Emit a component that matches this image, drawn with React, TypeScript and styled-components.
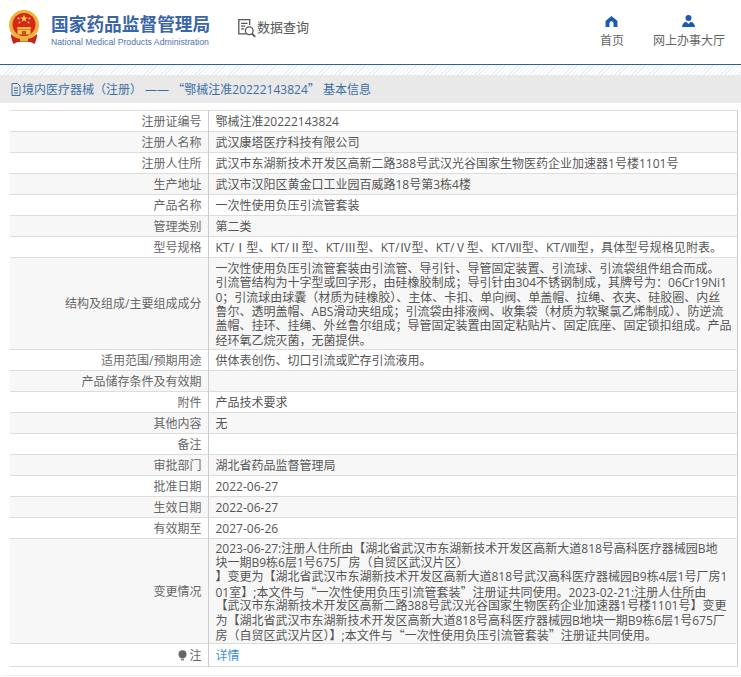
import React from "react";
import styled, { createGlobalStyle } from "styled-components";

const Global = createGlobalStyle`
  html, body { margin: 0; padding: 0; background: #fff; }
  body { font-family: "Open Sans", "Noto Sans CJK SC", sans-serif; font-size: 12px; color: #555; overflow: hidden; }
`;

const Page = styled.div`
  width: 741px;
  height: 677px;
  overflow: hidden;
  background: #fff;
`;

const Header = styled.header`
  height: 64px;
  display: flex;
  align-items: flex-start;
  border-bottom: 1px solid #2b6296;
  box-sizing: content-box;
`;

const Brand = styled.div`
  display: flex;
  align-items: flex-start;
  padding: 10px 0 0 8px;
  width: 237px;
  box-sizing: border-box;
  flex: none;
`;

const BrandText = styled.div`
  margin-left: 11px;
  display: flex;
  flex-direction: column;
`;

const BrandTitle = styled.div`
  font-family: "Noto Sans CJK SC", sans-serif;
  font-size: 17.7px;
  font-weight: 700;
  line-height: 24px;
  margin-top: 1px;
  color: #3a65a6;
  white-space: nowrap;
`;

const BrandSub = styled.div`
  font-family: "Liberation Sans", sans-serif;
  font-size: 8.7px;
  line-height: 12px;
  margin-top: 1px;
  color: #4f74ab;
  white-space: nowrap;
`;

const Query = styled.div`
  display: flex;
  align-items: center;
  padding-top: 18px;
  font-family: "Noto Sans CJK SC", sans-serif;
  font-size: 13px;
  line-height: 20px;
  color: #555;
  span { margin-top: -2px; }
`;

const Nav = styled.nav`
  margin-left: auto;
  display: flex;
  padding: 16px 16px 0 0;
  gap: 29px;
`;

const NavItem = styled.div`
  display: flex;
  flex-direction: column;
  align-items: center;
  font-family: "Noto Sans CJK SC", sans-serif;
  font-size: 12px;
  line-height: 16px;
  color: #666;
  svg { margin-bottom: 5px; }
`;

const Hatch = styled.div`
  height: 10px;
  background: repeating-linear-gradient(135deg, #e8f0f6 0 1px, #fff 1px 3px);
`;

const Band = styled.div`
  height: 28px;
  background: #e9e9e9;
  display: flex;
  align-items: center;
  padding-left: 11px;
  color: #3b6ea5;
  font-size: 12px;
  white-space: pre;
`;

const Panel = styled.main`
  margin-left: 1px;
  padding: 7px 2px 8px 9px;
  background: #fff;
  border-bottom: 1px solid #eee;
`;

const Table = styled.table`
  width: 728px;
  border-collapse: collapse;
  table-layout: fixed;
  border-top: 1px solid #ddd;
  border-right: 1px solid #ccc;
`;

const Row = styled.tr<{ $alt: boolean }>`
  background: ${(p) => (p.$alt ? "#f7f7f7" : "#fff")};
  border-bottom: 1px solid #ddd;
`;

const Label = styled.td<{ $h: number }>`
  width: 198px;
  box-sizing: border-box;
  height: ${(p) => p.$h}px;
  padding: 2px 6px 0 0;
  text-align: right;
  border-right: 1px solid #ccc;
  line-height: 14.4px;
  color: #666;
  white-space: nowrap;
`;

const Value = styled.td<{ $h: number; $spacing?: number }>`
  height: ${(p) => p.$h}px;
  box-sizing: border-box;
  padding: 2px 0 0 7px;
  line-height: 14.4px;
  color: #555;
  white-space: nowrap;
  letter-spacing: ${(p) => p.$spacing ?? 0}px;
`;

const Line = styled.span<{ $first?: boolean }>`
  display: block;
  height: 14.4px;
  margin-top: ${(p) => (p.$first ? 1 : 0)}px;
`;

const Quote = styled.span`
  font-family: "Noto Sans CJK SC", sans-serif;
`;

const DetailLink = styled.a`
  color: #3b8fd9;
  text-decoration: none;
  font-size: 12px;
`;

const Lamp = styled.svg`
  vertical-align: -1px;
  margin-right: 2px;
`;

// Curly quotes are full-width in the reference, so they take the CJK font.
const rich = (s: string) =>
  s.split(/([“”])/).map((part, i) =>
    part === "“" || part === "”" ? <Quote key={i}>{part}</Quote> : part
  );

const structure = [
  "一次性使用负压引流管套装由引流管、导引针、导管固定装置、引流球、引流袋组件组合而成。",
  "引流管结构为十字型或回字形，由硅橡胶制成；导引针由304不锈钢制成，其牌号为：06Cr19Ni1",
  "0；引流球由球囊（材质为硅橡胶）、主体、卡扣、单向阀、单盖帽、拉绳、衣夹、硅胶圈、内丝",
  "鲁尔、透明盖帽、ABS滑动夹组成；引流袋由排液阀、收集袋（材质为软聚氯乙烯制成）、防逆流",
  "盖帽、挂环、挂绳、外丝鲁尔组成；导管固定装置由固定粘贴片、固定底座、固定锁扣组成。产品",
  "经环氧乙烷灭菌，无菌提供。",
];

const changes = [
  "2023-06-27:注册人住所由【湖北省武汉市东湖新技术开发区高新大道818号高科医疗器械园B地",
  "块一期B9栋6层1号675厂房（自贸区武汉片区）",
  "】变更为【湖北省武汉市东湖新技术开发区高新大道818号武汉高科医疗器械园B9栋4层1号厂房1",
  "01室】;本文件与“一次性使用负压引流管套装”注册证共同使用。2023-02-21:注册人住所由",
  "【武汉市东湖新技术开发区高新二路388号武汉光谷国家生物医药企业加速器1号楼1101号】变更",
  "为【湖北省武汉市东湖新技术开发区高新大道818号高科医疗器械园B地块一期B9栋6层1号675厂",
  "房（自贸区武汉片区）】;本文件与“一次性使用负压引流管套装”注册证共同使用。",
];

const rows: [string, string | string[], number, number?][] = [
  ["注册证编号", "鄂械注准20222143824", 21],
  ["注册人名称", "武汉康塔医疗科技有限公司", 21],
  ["注册人住所", "武汉市东湖新技术开发区高新二路388号武汉光谷国家生物医药企业加速器1号楼1101号", 21],
  ["生产地址", "武汉市汉阳区黄金口工业园百威路18号第3栋4楼", 21],
  ["产品名称", "一次性使用负压引流管套装", 21],
  ["管理类别", "第二类", 21],
  ["型号规格", "KT/Ⅰ型、KT/Ⅱ型、KT/Ⅲ型、KT/Ⅳ型、KT/Ⅴ型、KT/Ⅶ型、KT/Ⅷ型，具体型号规格见附表。", 21, 0.12],
  ["结构及组成/主要组成成分", structure, 92],
  ["适用范围/预期用途", "供体表创伤、切口引流或贮存引流液用。", 21],
  ["产品储存条件及有效期", "", 21],
  ["附件", "产品技术要求", 21],
  ["其他内容", "无", 21],
  ["备注", "", 21],
  ["审批部门", "湖北省药品监督管理局", 21],
  ["批准日期", "2022-06-27", 21],
  ["生效日期", "2022-06-27", 21],
  ["有效期至", "2027-06-26", 21],
  ["变更情况", changes, 105],
];

const Emblem = () => (
  <svg width="32" height="35" viewBox="0 0 32 35">
    <circle cx="16" cy="15" r="15" fill="#e9b53a" />
    <circle cx="16" cy="14.5" r="11.5" fill="#d8261c" />
    <polygon points="16,4.5 17,7.4 20,7.4 17.6,9.2 18.5,12 16,10.3 13.5,12 14.4,9.2 12,7.4 15,7.4" fill="#f6d04a" />
    <circle cx="10.5" cy="8.5" r="1" fill="#f6d04a" />
    <circle cx="21.5" cy="8.5" r="1" fill="#f6d04a" />
    <circle cx="11.5" cy="12.5" r="0.9" fill="#f6d04a" />
    <circle cx="20.5" cy="12.5" r="0.9" fill="#f6d04a" />
    <path d="M10 17h12l1.5 2h-15zM9.5 19.5h13v5h-13z" fill="#f0c244" />
    <rect x="14" y="21" width="4" height="3.5" fill="#b9551e" />
    <path d="M3 24c3 3 7 5 13 5s10-2 13-5v3c-1 3-1.500 5-2.500 7l-4-2H9.500l-4 2C4.500 32 4 30 3 27z" fill="#c8261c" />
    <rect x="12" y="27.500" width="8" height="4" fill="#e9b53a" />
  </svg>
);

const QueryIcon = () => (
  <svg width="20" height="20" viewBox="0 0 21 22" fill="none" stroke="#555" strokeWidth="1.4">
    <path d="M10 17.500H1.500V1.700h12v6" />
    <path d="M4 6h7M4 9h4.500M4 12h3.500" />
    <circle cx="13" cy="14" r="4.200" />
    <path d="M16 17.200l3.500 3.500" strokeWidth="2" />
  </svg>
);

const HomeIcon = () => (
  <svg width="13" height="11" viewBox="0 0 13 12">
    <path d="M6.500 0L13 5.400V12H8.700V8A2.200 2.200 0 0 0 4.300 8V12H0V5.400z" fill="#1a5bb5" />
  </svg>
);

const UserIcon = () => (
  <svg width="13" height="12" viewBox="0 0 13 12" style={{ marginTop: -1 }}>
    <circle cx="6.500" cy="3" r="3" fill="#1a5bb5" />
    <path d="M0 12c.3-3.200 1.800-4.800 4.300-5.300L6.500 9l2.200-2.300c2.500.5 4 2.100 4.300 5.300z" fill="#1a5bb5" />
  </svg>
);

const DocIcon = () => (
  <svg width="10" height="13" viewBox="0 0 10 13" fill="none" stroke="#3b6ea5" strokeWidth="1" style={{ marginRight: 1 }}>
    <path d="M1 .5h5.500L9 3v9.500H1zM3 5h4M3 7.500h4M3 10h4" />
  </svg>
);

export default function App() {
  return (
    <Page>
      <Global />
      <Header>
        <Brand>
          <Emblem />
          <BrandText>
            <BrandTitle>国家药品监督管理局</BrandTitle>
            <BrandSub>National Medical Products Administration</BrandSub>
          </BrandText>
        </Brand>
        <Query>
          <QueryIcon />
          <span>数据查询</span>
        </Query>
        <Nav>
          <NavItem>
            <HomeIcon />
            首页
          </NavItem>
          <NavItem>
            <UserIcon />
            网上办事大厅
          </NavItem>
        </Nav>
      </Header>
      <Hatch />
      <Band>
        <DocIcon />
        <span>{rich("境内医疗器械（注册） —— “鄂械注准20222143824” 基本信息")}</span>
      </Band>
      <Panel>
        <Table>
          <tbody>
            {rows.map(([label, value, h, spacing], i) => (
              <Row key={label} $alt={i % 2 === 1}>
                <Label $h={h}>{label}</Label>
                <Value $h={h} $spacing={spacing}>
                  {Array.isArray(value)
                    ? value.map((l, n) => (
                        <Line key={l} $first={n === 0 && h === 92}>
                          {rich(l)}
                        </Line>
                      ))
                    : rich(value)}
                </Value>
              </Row>
            ))}
            <Row $alt={false}>
              <Label $h={23}>
                <Lamp width="9" height="11" viewBox="0 0 9 11">
                  <circle cx="4.500" cy="4.200" r="4" fill="#666" />
                  <rect x="3" y="8.500" width="3" height="2" fill="#888" />
                </Lamp>
                注
              </Label>
              <Value $h={23}>
                <DetailLink href="#">详情</DetailLink>
              </Value>
            </Row>
          </tbody>
        </Table>
      </Panel>
    </Page>
  );
}
